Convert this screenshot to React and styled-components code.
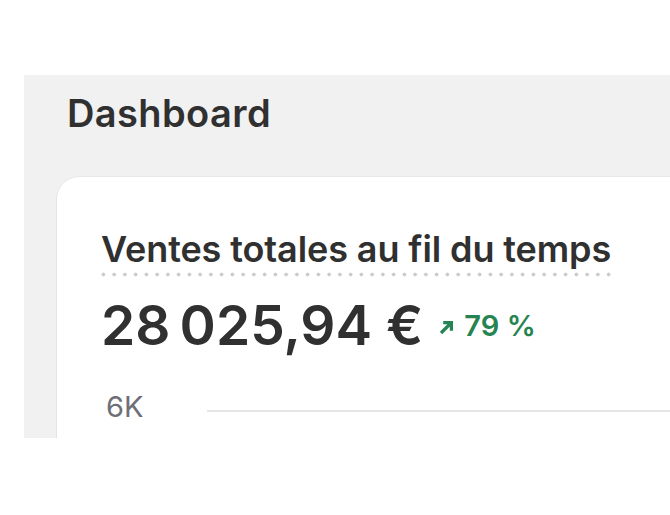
import React from "react";
import styled, { createGlobalStyle } from "styled-components";

const GlobalStyle = createGlobalStyle`
	html, body {
		margin: 0;
		background: #ffffff;
		font-family: Inter, "Noto Sans", "Liberation Sans", sans-serif;
		color: #303030;
	}
`;

const App = () => {
	return (
		<>
			<GlobalStyle />
			<Frame>
				<Header>Dashboard</Header>
				<Card>
					<CardTitle>Ventes totales au fil du temps</CardTitle>
					<MetricRow>
						<Metric>28{"\u202F"}025,94{"\u00A0"}€</Metric>
						<Trend>
							<svg width="15" height="15" viewBox="0 0 15 15" fill="none">
								<path
									d="M2 13 L11 4 M4.2 2.6 H12.4 V10.8"
									stroke="currentColor"
									strokeWidth="3.2"
									strokeLinecap="butt"
								/>
							</svg>
							79 %
						</Trend>
					</MetricRow>
					<Chart>
						<AxisRow>
							<AxisLabel>6K</AxisLabel>
							<GridLine />
						</AxisRow>
					</Chart>
				</Card>
			</Frame>
		</>
	);
};

const Frame = styled.div`
	margin: 75px 0 0 24px;
	height: 363px;
	background: #f1f1f1;
	display: flex;
	flex-direction: column;
	overflow: hidden;
`;

const Header = styled.h1`
	margin: 0;
	height: 102px;
	padding: 16px 0 0 43px;
	box-sizing: border-box;
	font-size: 38px;
	line-height: 44px;
	font-weight: 600;
	letter-spacing: 0.4px;
	color: #303030;
`;

const Card = styled.div`
	flex: 1;
	margin-left: 33px;
	padding: 52px 0 0 44px;
	background: #ffffff;
	border-radius: 22px 0 0 0;
	box-shadow: 0 0 0 1px rgba(0, 0, 0, 0.035), 0 2px 3px rgba(0, 0, 0, 0.05);
	display: flex;
	flex-direction: column;
	align-items: flex-start;
`;

const CardTitle = styled.h2`
	margin: 0;
	display: inline-block;
	font-size: 36px;
	line-height: 40px;
	font-weight: 600;
	letter-spacing: -0.1px;
	color: #303030;
	padding-bottom: 8px;
	background-image: radial-gradient(circle, #cbcbcb 1.7px, transparent 2.2px);
	background-size: 10.75px 5px;
	background-repeat: repeat-x;
	background-position: -3px bottom;
`;

const MetricRow = styled.div`
	display: flex;
	align-items: center;
	gap: 16px;
	margin-top: 16px;
`;

const Metric = styled.div`
	font-size: 55px;
	line-height: 64px;
	font-weight: 600;
	letter-spacing: -0.4px;
	color: #303030;
`;

const Trend = styled.div`
	display: flex;
	align-items: center;
	gap: 10px;
	margin-top: 2px;
	font-size: 29px;
	line-height: 34px;
	font-weight: 600;
	color: #268352;

	svg {
		margin-top: 2px;
	}
`;

const Chart = styled.div`
	margin-top: 32px;
	width: 100%;
`;

const AxisRow = styled.div`
	display: flex;
	align-items: center;
	gap: 64px;
`;

const AxisLabel = styled.span`
	font-size: 29px;
	line-height: 36px;
	color: #6e6e76;
	margin-left: 5px;
`;

const GridLine = styled.div`
	flex: 1;
	height: 2px;
	margin-top: 8px;
	background: #e6e6e6;
`;

export default App;
